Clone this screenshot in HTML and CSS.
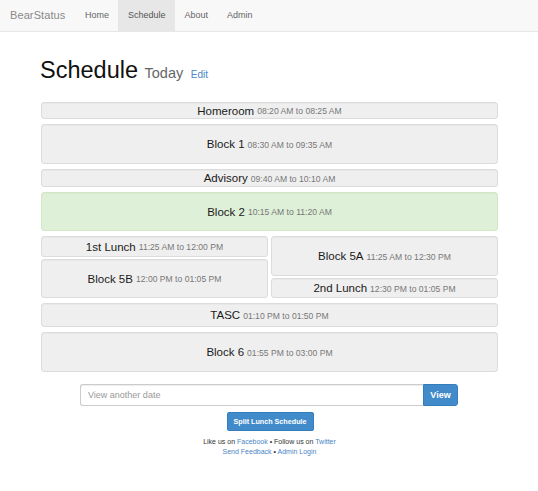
FILE: index.html
```html
<!DOCTYPE html>
<html>
<head>
<meta charset="utf-8">
<title>BearStatus - Schedule</title>
<link rel="stylesheet" href="styles.css">
</head>
<body>
<nav class="navbar">
  <a class="brand" href="#">BearStatus</a>
  <ul class="nav">
    <li><a href="#">Home</a></li>
    <li class="active"><a href="#">Schedule</a></li>
    <li><a href="#">About</a></li>
    <li><a href="#">Admin</a></li>
  </ul>
</nav>
<main class="container">
  <h1 class="title">Schedule <small class="sub">Today</small> <a class="edit" href="#">Edit</a></h1>
  <div class="schedule">
    <div class="block h17"><span class="name">Homeroom</span> <span class="time">08:20 AM to 08:25 AM</span></div>
    <div class="block h40"><span class="name">Block 1</span> <span class="time">08:30 AM to 09:35 AM</span></div>
    <div class="block h18"><span class="name">Advisory</span> <span class="time">09:40 AM to 10:10 AM</span></div>
    <div class="block h39 current"><span class="name">Block 2</span> <span class="time">10:15 AM to 11:20 AM</span></div>
    <div class="split">
      <div class="col">
        <div class="block h21"><span class="name">1st Lunch</span> <span class="time">11:25 AM to 12:00 PM</span></div>
        <div class="block h39"><span class="name">Block 5B</span> <span class="time">12:00 PM to 01:05 PM</span></div>
      </div>
      <div class="col">
        <div class="block h40"><span class="name">Block 5A</span> <span class="time">11:25 AM to 12:30 PM</span></div>
        <div class="block h20"><span class="name">2nd Lunch</span> <span class="time">12:30 PM to 01:05 PM</span></div>
      </div>
    </div>
    <div class="block h24"><span class="name">TASC</span> <span class="time">01:10 PM to 01:50 PM</span></div>
    <div class="block h40"><span class="name">Block 6</span> <span class="time">01:55 PM to 03:00 PM</span></div>
  </div>
  <form class="date-form">
    <input class="date-input" type="text" placeholder="View another date">
    <button class="view-btn" type="button">View</button>
  </form>
  <div class="split-wrap"><button class="split-btn" type="button">Split Lunch Schedule</button></div>
  <footer class="footer">
    <p>Like us on <a href="#">Facebook</a> &bull; Follow us on <a href="#">Twitter</a></p>
    <p><a href="#">Send Feedback</a> &bull; <a href="#">Admin Login</a></p>
  </footer>
</main>
</body>
</html>
```
FILE: styles.css
```css
* { box-sizing: border-box; }
html, body { margin: 0; padding: 0; }
body {
  font-family: "Liberation Sans", Arial, sans-serif;
  color: #333;
  background: #fff;
}
a { text-decoration: none; color: #428bca; }

.navbar {
  display: flex;
  align-items: stretch;
  height: 32px;
  background: #f8f8f8;
  border-bottom: 1px solid #e7e7e7;
}
.brand {
  padding: 0 10px 0 10px;
  line-height: 31px;
  font-size: 11px;
  color: #888;
  letter-spacing: 0.1px;
}
.nav {
  display: flex;
  list-style: none;
  margin: 0;
  padding: 0;
}
.nav a {
  display: block;
  padding: 0 9.5px;
  line-height: 31px;
  font-size: 9px;
  color: #666;
}
.nav .active a {
  background: #e7e7e7;
  color: #555;
}

.container {
  width: 457px;
  margin: 0 0 0 41px;
}
.title {
  margin: 25px 0 0 -1px;
  height: 26px;
  font-size: 23.5px;
  line-height: 26px;
  font-weight: normal;
  color: #111;
}
.sub {
  font-size: 14.5px;
  color: #666;
}
.edit {
  font-size: 10px;
  color: #4a86c5;
  margin-left: 1px;
}

.schedule {
  display: flex;
  flex-direction: column;
  gap: 5px;
  margin-top: 19px;
}
.block {
  display: flex;
  align-items: center;
  justify-content: center;
  gap: 3px;
  background: #efefef;
  border: 1px solid #dcdcdc;
  border-radius: 3px;
  box-shadow: inset 0 1px 1px rgba(0,0,0,0.03);
  white-space: nowrap;
}
.block.current {
  background: #dff0d8;
  border-color: #d3e6c6;
}
.name {
  font-size: 11.5px;
  color: #1a1a1a;
}
.time {
  font-size: 8.6px;
  color: #777;
  position: relative;
  top: 0.5px;
}
.h17 { height: 17px; }
.h18 { height: 18px; }
.h20 { height: 20px; }
.h21 { height: 21px; }
.h24 { height: 24px; }
.h39 { height: 39px; }
.h40 { height: 40px; }

.split {
  display: grid;
  grid-template-columns: 227px 227px;
  column-gap: 3px;
}
.col {
  display: flex;
  flex-direction: column;
  gap: 2px;
}

.date-form {
  display: flex;
  width: 378px;
  margin: 12px 0 0 39px;
}
.date-input {
  flex: 1;
  height: 22px;
  border: 1px solid #ccc;
  border-right: none;
  border-radius: 3px 0 0 3px;
  padding: 0 7px;
  font-family: "Liberation Sans", Arial, sans-serif;
  font-size: 9px;
  color: #555;
  box-shadow: inset 0 1px 1px rgba(0,0,0,0.075);
  outline: none;
}
.date-input::placeholder { color: #999; }
.view-btn {
  width: 35px;
  height: 22px;
  background: #428bca;
  border: 1px solid #357ebd;
  border-radius: 0 3px 3px 0;
  color: #fff;
  font-family: "Liberation Sans", Arial, sans-serif;
  font-weight: bold;
  font-size: 9px;
  padding: 0;
}

.split-wrap {
  display: flex;
  justify-content: center;
  margin-top: 6px;
  padding-left: 1px;
}
.split-btn {
  width: 87px;
  height: 19px;
  background: #428bca;
  border: 1px solid #357ebd;
  border-radius: 2px;
  color: #fff;
  font-family: "Liberation Sans", Arial, sans-serif;
  font-weight: bold;
  font-size: 7.2px;
  padding: 0;
}

.footer {
  margin-top: 6px;
  text-align: center;
  font-size: 7px;
  line-height: 9.5px;
  color: #333;
}
.footer p { margin: 0; }
.footer a { color: #4a86c5; }
```
